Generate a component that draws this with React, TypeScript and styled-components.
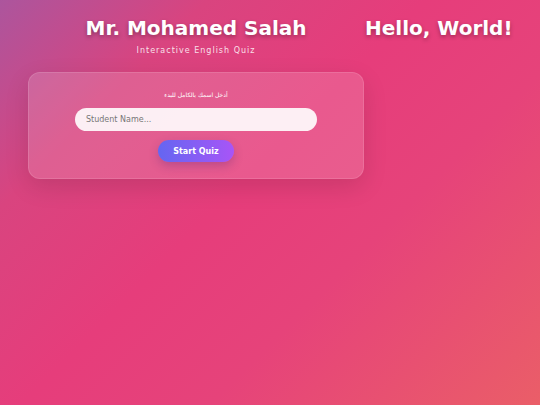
import React, { useState } from 'react';
import styled, { createGlobalStyle } from 'styled-components';

const GlobalStyle = createGlobalStyle`
  html, body {
    margin: 0;
    padding: 0;
    min-height: 100%;
  }
  body {
    font-family: 'DejaVu Sans', Verdana, sans-serif;
    background: linear-gradient(135deg, #ac559d 0%, #d9447f 22%, #e63d7b 45%, #e6437a 65%, #ea5e68 100%);
    min-height: 405px;
    color: #fff;
  }
`;

const App: React.FC = () => {
  const [name, setName] = useState('');

  return (
    <>
      <GlobalStyle />
      <Page>
        <Main>
          <Header>
            <Title>Mr. Mohamed Salah</Title>
            <Subtitle>Interactive English Quiz</Subtitle>
          </Header>
          <Card>
            <Prompt dir="rtl">أدخل اسمك بالكامل للبدء</Prompt>
            <NameInput
              placeholder="Student Name..."
              value={name}
              onChange={e => setName(e.target.value)}
            />
            <StartButton>Start Quiz</StartButton>
          </Card>
        </Main>
        <Hello>Hello, World!</Hello>
      </Page>
    </>
  );
};

const Page = styled.div`
  display: flex;
  align-items: flex-start;
  min-height: 405px;
`;

const Main = styled.div`
  width: 336px;
  margin-left: 28px;
  padding-top: 16px;
`;

const Header = styled.header`
  text-align: center;
  margin-bottom: 15px;
`;

const Title = styled.h1`
  margin: 0;
  font-size: 20px;
  font-weight: 700;
  line-height: 24px;
  text-shadow: 0 2px 4px rgba(0, 0, 0, 0.3);
`;

const Subtitle = styled.p`
  margin: 5px 0 0;
  font-size: 8px;
  line-height: 12px;
  letter-spacing: 1px;
  color: rgba(255, 255, 255, 0.85);
`;

const Card = styled.div`
  background: rgba(255, 255, 255, 0.15);
  border: 1px solid rgba(255, 255, 255, 0.12);
  border-radius: 12px;
  box-shadow: 0 8px 24px rgba(0, 0, 0, 0.12);
  padding: 17px 0 16px;
  display: flex;
  flex-direction: column;
  align-items: center;
  box-sizing: border-box;
  height: 107px;
`;

const Prompt = styled.p`
  margin: 0 0 8px;
  font-size: 6px;
  line-height: 10px;
  font-weight: 400;
  color: #fff;
`;

const NameInput = styled.input`
  width: 242px;
  height: 23px;
  box-sizing: border-box;
  border: none;
  border-radius: 12px;
  padding: 0 11px;
  background: rgba(255, 255, 255, 0.9);
  font-family: 'DejaVu Sans', Verdana, sans-serif;
  font-size: 8px;
  color: #444;
  outline: none;
  margin-bottom: 9px;

  &::placeholder {
    color: #777;
  }
`;

const StartButton = styled.button`
  width: 76px;
  height: 22px;
  border: none;
  border-radius: 11px;
  background: linear-gradient(90deg, #6466f1, #a855f7);
  color: #fff;
  font-family: 'DejaVu Sans', Verdana, sans-serif;
  font-size: 8px;
  font-weight: 700;
  box-shadow: 0 4px 10px rgba(90, 40, 120, 0.3);
  cursor: pointer;
`;

const Hello = styled.h1`
  margin: 16px 0 0 1px;
  font-size: 20px;
  font-weight: 700;
  line-height: 24px;
  text-shadow: 0 2px 4px rgba(0, 0, 0, 0.3);
`;

export default App;
